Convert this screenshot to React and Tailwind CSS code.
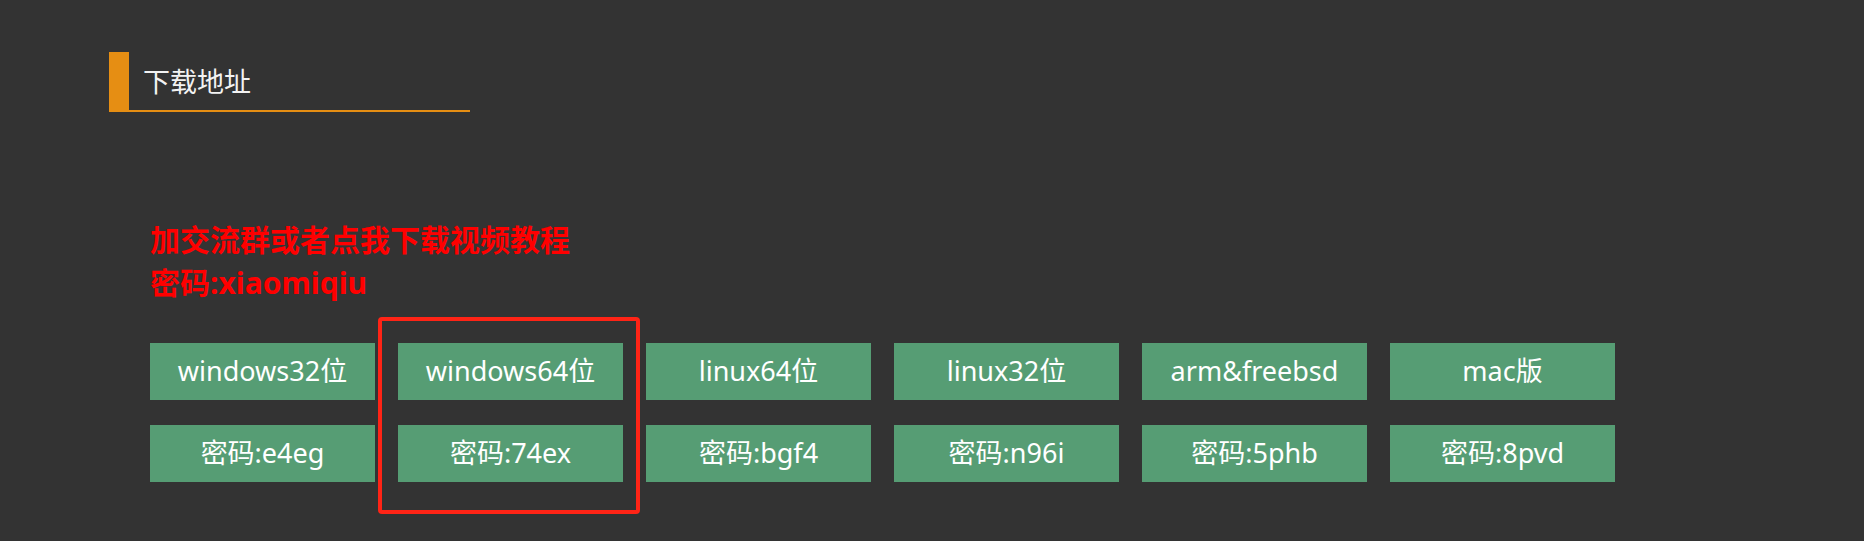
export default function App() {
  const items = [
    { name: "windows32位", pwd: "密码:e4eg" },
    { name: "windows64位", pwd: "密码:74ex" },
    { name: "linux64位", pwd: "密码:bgf4" },
    { name: "linux32位", pwd: "密码:n96i" },
    { name: "arm&freebsd", pwd: "密码:5phb" },
    { name: "mac版", pwd: "密码:8pvd" },
  ];

  return (
    <div
      className="w-[1864px] h-[541px] bg-[#333333] overflow-hidden relative"
      style={{ fontFamily: '"Noto Sans", "Noto Sans CJK SC", sans-serif' }}
    >
      <div className="pt-[52px] pl-[109px]">
        <div className="flex w-[361px] h-[60px] border-b-2 border-[#e68e13]">
          <div className="w-[20px] bg-[#e68e13]" />
          <div className="pl-[14px] pt-[12px] text-[27px] leading-[36px] text-[#f2f2f2]">
            下载地址
          </div>
        </div>

        <div className="pl-[41px] pt-[106px]">
          <div className="text-[30px] leading-[43px] font-bold text-[#ff0000]">
            <p>加交流群或者点我下载视频教程</p>
            <p>密码:xiaomiqiu</p>
          </div>

          <div className="mt-[39px] grid grid-cols-[repeat(6,225px)] gap-x-[23px] gap-y-[25px]">
            {items.map((it) => (
              <div
                key={it.name}
                className="h-[57px] bg-[#569d74] text-white text-[27px] flex items-center justify-center"
              >
                {it.name}
              </div>
            ))}
            {items.map((it) => (
              <div
                key={it.pwd}
                className="h-[57px] bg-[#569d74] text-white text-[27px] flex items-center justify-center"
              >
                {it.pwd}
              </div>
            ))}
          </div>
        </div>
      </div>

      <div className="absolute left-[378px] top-[317px] w-[262px] h-[197px] border-[4px] border-[#ff2416] rounded-[4px]" />
    </div>
  );
}
